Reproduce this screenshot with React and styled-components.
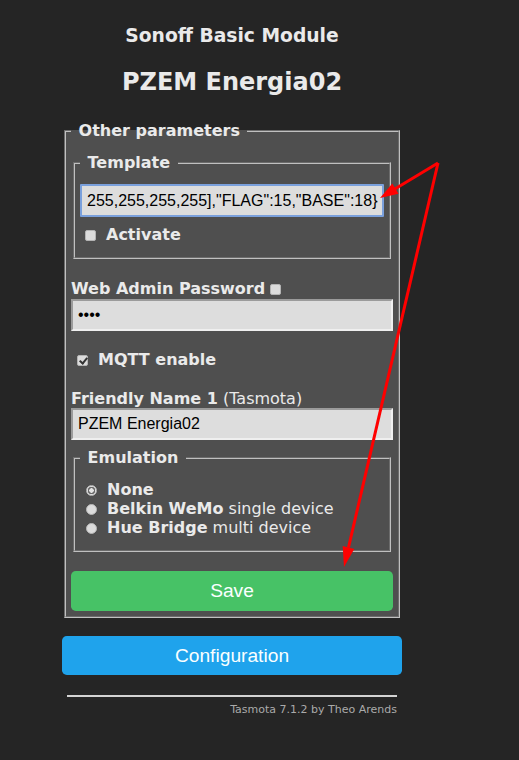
import styled, { createGlobalStyle } from "styled-components";

const GlobalStyle = createGlobalStyle`
  html, body {
    margin: 0;
    padding: 0;
    background: #252525;
  }
  body {
    font-family: "DejaVu Sans", Verdana, sans-serif;
    font-size: 16px;
    color: #eaeaea;
  }
`;

const App = () => {
  return (
    <Page>
      <GlobalStyle />
      <ModuleName>Sonoff Basic Module</ModuleName>
      <DeviceName>PZEM Energia02</DeviceName>

      <Main>
        <Fieldset $top={25} $bottom={5}>
          <Legend>&nbsp;Other parameters&nbsp;</Legend>

          <Fieldset $top={12} $bottom={13}>
            <Legend>&nbsp;Template&nbsp;</Legend>
            <TemplateField>
              255,255,255,255],"FLAG":15,"BASE":18&#125;
              <Caret />
            </TemplateField>
            <Row $top={8}>
              <Check $left={5} />
              <b>Activate</b>
            </Row>
          </Fieldset>

          <Row $top={20}>
            <b>Web Admin Password</b>
            <Check $left={5} />
          </Row>
          <TextBox type="password" value="xxxx" readOnly $top={1} />

          <Row $top={19}>
            <Check $left={6} $checked />
            <b>MQTT enable</b>
          </Row>

          <Row $top={20}>
            <b>Friendly Name 1</b>&nbsp;(Tasmota)
          </Row>
          <TextBox type="text" value="PZEM Energia02" readOnly />

          <Fieldset $top={8} $bottom={13}>
            <Legend>&nbsp;Emulation&nbsp;</Legend>
            <RadioList>
              <Row>
                <Radio $checked />
                <b>None</b>
              </Row>
              <Row>
                <Radio />
                <b>Belkin WeMo</b>&nbsp;single device
              </Row>
              <Row>
                <Radio />
                <b>Hue Bridge</b>&nbsp;multi device
              </Row>
            </RadioList>
          </Fieldset>

          <Button $bg="#47c266" $top={19} $height={40}>
            Save
          </Button>
        </Fieldset>

        <Button $bg="#1fa3ec" $top={18} $height={39}>
          Configuration
        </Button>

        <Rule />
        <Footer>Tasmota 7.1.2 by Theo Arends</Footer>
      </Main>

      <Arrows viewBox="0 0 519 760" width="519" height="760">
        <line x1="438" y1="163" x2="394" y2="189.5" />
        <polygon points="380,198 398.5,193.8 392.3,183.6" />
        <line x1="438" y1="163" x2="348.5" y2="547.5" />
        <polygon points="344,567 354.3,548.9 342.7,546.1" />
      </Arrows>
    </Page>
  );
};

export default App;

const Page = styled.div`
  position: relative;
  width: 464px;
  min-height: 760px;
  padding-top: 25px;
  box-sizing: border-box;
  text-align: center;
`;

const ModuleName = styled.h3`
  margin: 0;
  font-size: 18.72px;
  line-height: 22px;
  font-weight: bold;
`;

const DeviceName = styled.h2`
  margin: 21px 0 0;
  font-size: 24px;
  line-height: 28px;
  font-weight: bold;
`;

const Main = styled.div`
  width: 340px;
  margin: 0 auto;
  text-align: left;
`;

const Fieldset = styled.fieldset`
  margin: ${(p) => p.$top}px 2px 0;
  padding: 0 5px ${(p) => p.$bottom}px;
  border: 2px groove #c0c0c0;
  background: #4f4f4f;
  min-width: 0;
`;

const Legend = styled.legend`
  padding: 0 2px;
  font-weight: bold;
  line-height: 20px;
`;

const Row = styled.div`
  display: flex;
  align-items: center;
  margin-top: ${(p) => p.$top || 0}px;
  line-height: 19px;
  white-space: nowrap;
`;

const RadioList = styled.div`
  margin-top: 12px;
`;

const Check = styled.span`
  position: relative;
  flex: none;
  width: 11px;
  height: 11px;
  margin: 1px 10px 0 ${(p) => p.$left}px;
  box-sizing: border-box;
  border: 1px solid #b4b4b4;
  border-radius: 2px;
  background: #dcdcdc;
  &::after {
    content: "";
    display: ${(p) => (p.$checked ? "block" : "none")};
    position: absolute;
    left: 3px;
    top: 0px;
    width: 3px;
    height: 6px;
    border: solid #333;
    border-width: 0 2px 2px 0;
    transform: rotate(40deg);
  }
`;

const Radio = styled.span`
  flex: none;
  width: 11px;
  height: 11px;
  margin: 1px 10px 0 6px;
  box-sizing: border-box;
  border-radius: 50%;
  border: 1px solid #b8b8b8;
  background: ${(p) =>
    p.$checked
      ? "radial-gradient(circle, #e4e4e4 0 2px, #6a6a6a 2.5px 3.5px, #dcdcdc 4px)"
      : "#dcdcdc"};
`;

const TextBox = styled.input`
  display: block;
  width: 100%;
  height: 32px;
  margin: ${(p) => p.$top || 0}px 0 0;
  padding: 0 5px;
  box-sizing: border-box;
  border: 2px inset #efefef;
  background: #dddddd;
  color: #000;
  font-family: "Liberation Sans", Arial, sans-serif;
  font-size: 16px;
  outline: none;
`;

const TemplateField = styled.div`
  display: flex;
  align-items: center;
  height: 33px;
  margin-top: 11px;
  padding: 0 5px;
  box-sizing: border-box;
  border: 2px solid #7aa0dc;
  border-radius: 1px;
  background: #dddddd;
  color: #000;
  font-family: "Liberation Sans", Arial, sans-serif;
  font-size: 16px;
  white-space: nowrap;
  overflow: hidden;
`;

const Caret = styled.span`
  width: 1px;
  height: 19px;
  margin-left: 1px;
  background: #000;
`;

const Button = styled.button`
  display: block;
  width: 100%;
  height: ${(p) => p.$height}px;
  margin-top: ${(p) => p.$top}px;
  padding: 0;
  border: 0;
  border-radius: 0.3rem;
  background: ${(p) => p.$bg};
  color: #faffff;
  font-family: "Liberation Sans", Arial, sans-serif;
  font-size: 19.2px;
  cursor: pointer;
`;

const Rule = styled.div`
  height: 2px;
  margin: 20px 5px 0;
  background: #d4d4d4;
`;

const Footer = styled.div`
  margin: 6px 5px 0;
  text-align: right;
  font-size: 11px;
  line-height: 13px;
  color: #aaa;
`;

const Arrows = styled.svg`
  position: absolute;
  left: 0;
  top: 0;
  pointer-events: none;
  line {
    stroke: #ff0000;
    stroke-width: 3;
  }
  polygon {
    fill: #ff0000;
  }
`;
